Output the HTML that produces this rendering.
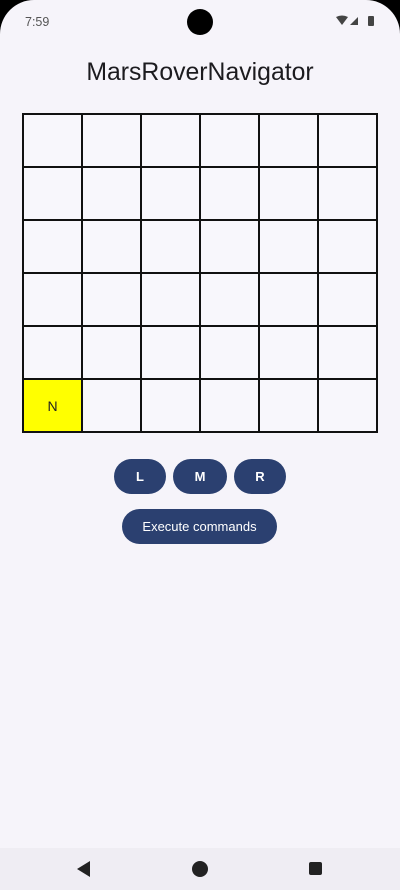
<!DOCTYPE html>
<html><head><style>
body{margin:0;width:400px;height:890px;background:#000;font-family:"Liberation Sans",sans-serif;overflow:hidden}
.scr{position:absolute;left:0;top:0;width:400px;height:890px;background:#f6f4fa;border-radius:34px 34px 0 0;overflow:hidden}
.t{position:absolute;font-size:12.5px;color:#555}
.grid{position:absolute;left:22px;top:113px;width:356px;height:320px;display:grid;grid-template-columns:repeat(6,1fr);grid-template-rows:repeat(6,1fr);border:1px solid #111;box-sizing:border-box}
.grid div{border:1px solid #111;background:#f8f7fc;display:flex;align-items:center;justify-content:center;font-size:14px;color:#222}
.b{position:absolute;background:#2b4070;color:#fff;border-radius:18px;display:flex;align-items:center;justify-content:center;font-size:13px;font-weight:bold}
</style></head><body><div class="scr">
<div class="t" style="left:25px;top:15px">7:59</div>
<div style="position:absolute;left:187px;top:9px;width:26px;height:26px;border-radius:50%;background:#000"></div>
<svg style="position:absolute;left:336px;top:15px" width="42" height="13" viewBox="0 0 42 13"><path d="M0 2Q6 -1 12 2L6 10Z" fill="#444"/><path d="M14 10L22 2V10Z" fill="#444"/><rect x="32" y="1" width="6" height="10" rx="1" fill="#444"/></svg>
<div style="position:absolute;left:0;width:400px;top:59px;text-align:center;font-size:24.8px;color:#1c1b1f">MarsRoverNavigator</div>
<div class="grid">
<div></div><div></div><div></div><div></div><div></div><div></div>
<div></div><div></div><div></div><div></div><div></div><div></div>
<div></div><div></div><div></div><div></div><div></div><div></div>
<div></div><div></div><div></div><div></div><div></div><div></div>
<div></div><div></div><div></div><div></div><div></div><div></div>
<div style="background:#ffff00">N</div><div></div><div></div><div></div><div></div><div></div>
</div>
<div class="b" style="left:114px;top:459px;width:52px;height:35px">L</div>
<div class="b" style="left:173px;top:459px;width:54px;height:35px">M</div>
<div class="b" style="left:234px;top:459px;width:52px;height:35px">R</div>
<div class="b" style="left:122px;top:509px;width:155px;height:35px;font-weight:normal">Execute commands</div>
<div style="position:absolute;left:0;top:848px;width:400px;height:42px;background:#efedf3"></div>
<svg style="position:absolute;left:76px;top:860px" width="16" height="18"><path d="M14 1V17L1 9Z" fill="#222"/></svg>
<div style="position:absolute;left:192px;top:861px;width:16px;height:16px;border-radius:50%;background:#222"></div>
<div style="position:absolute;left:309px;top:862px;width:13px;height:13px;border-radius:2px;background:#222"></div>
</div></body></html>
